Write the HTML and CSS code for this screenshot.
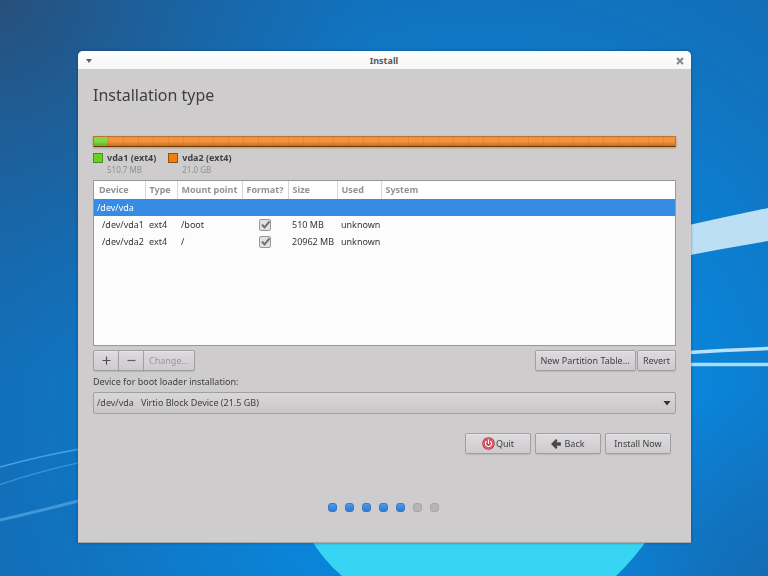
FILE: index.html
```html
<!DOCTYPE html>
<html lang="en">
<head>
<meta charset="utf-8">
<title>Install</title>
<link rel="stylesheet" href="styles.css">
</head>
<body>
<svg class="wallpaper" viewBox="0 0 768 576" preserveAspectRatio="none" aria-hidden="true">
  <defs>
    <radialGradient id="glow" gradientUnits="userSpaceOnUse" cx="480" cy="420" r="560">
      <stop offset="0" stop-color="#068ae1"/>
      <stop offset=".4" stop-color="#0a84d9"/>
      <stop offset=".75" stop-color="#1173bf"/>
      <stop offset="1" stop-color="#156bb2"/>
    </radialGradient>
    <radialGradient id="corner" gradientUnits="userSpaceOnUse" cx="0" cy="0" r="380">
      <stop offset="0" stop-color="#27507a"/>
      <stop offset="1" stop-color="#1a62a3" stop-opacity="0"/>
    </radialGradient>
    <radialGradient id="foot" gradientUnits="userSpaceOnUse" cx="768" cy="576" r="190">
      <stop offset="0" stop-color="#146bb4"/>
      <stop offset="1" stop-color="#146bb4" stop-opacity="0"/>
    </radialGradient>
  </defs>
  <rect width="768" height="576" fill="url(#glow)"/>
  <rect width="768" height="576" fill="url(#corner)"/>
  <rect width="768" height="576" fill="url(#foot)"/>
  <path d="M680 227Q725 217 768 208V241Q725 248 680 257Z" fill="#bcdff4"/>
  <path d="M680 353Q725 350 768 348.500" fill="none" stroke="#b9e2fa" stroke-width="3.500"/>
  <path d="M680 364.500H768" stroke="#a8dcf8" stroke-width="3.500"/>
  <path d="M0 467Q40 456 80 449" fill="none" stroke="#46a0e2" stroke-width="1.500"/>
  <path d="M0 484.500Q40 471 80 462.500" fill="none" stroke="#3590d6" stroke-width="1.500"/>
  <path d="M0 520Q40 511 80 500.500" fill="none" stroke="#4098d8" stroke-width="3"/>
  <path d="M309 536Q323 560 342 576H616Q633 560 650 536Z" fill="#38d4f3"/>
</svg>
<main class="desktop">
  <section class="window">
    <header class="titlebar">
      <button class="title-button" aria-label="Window menu"><svg width="6" height="4" viewBox="0 0 6 4"><path d="M0 0H6L3 4Z" fill="#5c5f63"/></svg></button>
      <span class="title">Install</span>
      <button class="title-button" aria-label="Close"><svg width="8" height="8" viewBox="0 0 8 8"><path d="M1 1L7 7M7 1L1 7" stroke="#858789" stroke-width="2"/></svg></button>
    </header>
    <div class="content">
      <h1>Installation type</h1>
      <div class="disk-bar"><span class="disk-part"></span></div>
      <ul class="legend">
        <li><i class="swatch green"></i><div><strong>vda1 (ext4)</strong><small>510.7 MB</small></div></li>
        <li><i class="swatch orange"></i><div><strong>vda2 (ext4)</strong><small>21.0 GB</small></div></li>
      </ul>
      <div class="list">
        <table>
          <colgroup><col class="c-device"><col class="c-type"><col class="c-mount"><col class="c-format"><col class="c-size"><col class="c-used"><col></colgroup>
          <thead><tr><th>Device</th><th>Type</th><th>Mount point</th><th>Format?</th><th>Size</th><th>Used</th><th>System</th></tr></thead>
          <tbody>
            <tr class="selected"><td colspan="7">/dev/vda</td></tr>
            <tr><td class="child">/dev/vda1</td><td>ext4</td><td>/boot</td><td class="check"><label class="tick"><input type="checkbox" checked aria-label="Format /dev/vda1"><svg viewBox="0 0 12 12"><path d="M3 5.500L5.500 8.500L10.500 2.500" /></svg></label></td><td>510 MB</td><td>unknown</td><td></td></tr>
            <tr><td class="child">/dev/vda2</td><td>ext4</td><td>/</td><td class="check"><label class="tick"><input type="checkbox" checked aria-label="Format /dev/vda2"><svg viewBox="0 0 12 12"><path d="M3 5.500L5.500 8.500L10.500 2.500" /></svg></label></td><td>20962 MB</td><td>unknown</td><td></td></tr>
          </tbody>
        </table>
      </div>
      <div class="toolbar">
        <div class="group">
          <button class="btn square" aria-label="Add"><svg width="9" height="9" viewBox="0 0 9 9"><path d="M0.500 4.500H8.500M4.500 0.500V8.500" stroke="#505050" stroke-width="1.200"/></svg></button>
          <button class="btn square" aria-label="Remove"><svg width="9" height="9" viewBox="0 0 9 9"><path d="M0.500 4.500H8.500" stroke="#606060" stroke-width="1.200"/></svg></button>
          <button class="btn change" disabled>Change...</button>
        </div>
        <div class="pair">
          <button class="btn">New Partition Table...</button>
          <button class="btn">Revert</button>
        </div>
      </div>
      <label class="boot-label" for="boot">Device for boot loader installation:</label>
      <div class="combo">
        <select id="boot"><option>/dev/vda &nbsp; Virtio Block Device (21.5 GB)</option></select>
        <svg class="arrow" width="8" height="5" viewBox="0 0 8 5"><path d="M0.500 0H7.500L4 4.500Z" fill="#333"/></svg>
      </div>
      <div class="actions">
        <button class="btn"><svg width="13" height="13" viewBox="0 0 13 13"><circle cx="6.500" cy="6.500" r="6.200" fill="#b92a37"/><circle cx="6.500" cy="6.500" r="4.900" fill="#d03f4b" stroke="#e6a0a5" stroke-width=".7"/><path d="M4.500 4.300A3 3 0 1 0 8.500 4.300M6.500 2.800V6.500" fill="none" stroke="#fff" stroke-width="1.200" stroke-linecap="round"/></svg>Quit</button>
        <button class="btn back"><svg width="10" height="10" viewBox="0 0 10 10"><path d="M0 5L5 0L6.500 1.500L5.500 3.300H9.800V6.700H5.500L6.500 8.500L5 10Z" fill="#484848"/></svg>Back</button>
        <button class="btn">Install Now</button>
      </div>
      <div class="dots"><i class="on"></i><i class="on"></i><i class="on"></i><i class="on"></i><i class="on"></i><i></i><i></i></div>
    </div>
  </section>
</main>
</body>
</html>
```
FILE: styles.css
```css
* { box-sizing: border-box; }
body {
  margin: 0;
  font: 9px/12px "Noto Sans", sans-serif;
  color: #404042;
  background: #0f76c4;
}
button, select { font: inherit; color: inherit; }
svg { display: block; flex: none; }
.wallpaper { position: fixed; inset: 0; width: 100%; height: 100%; }
.desktop {
  position: relative;
  display: flex;
  min-height: 100vh;
  padding: 51px 77px 33px 78px;
}
.window {
  flex: 1;
  min-width: 0;
  background: #cecccd;
  border-radius: 5px 5px 0 0;
  border-bottom: 1px solid #a5a9ac;
  box-shadow: 0 0 3px rgba(0, 30, 70, .45);
}
.titlebar {
  display: flex;
  align-items: center;
  justify-content: space-between;
  height: 18px;
  padding: 1px 7px 0 8px;
  border-radius: 5px 5px 0 0;
  background: linear-gradient(#fff, #f4f5f7);
}
.title { font-weight: 700; color: #56585c; }
.title-button {
  display: flex;
  padding: 0;
  border: 0;
  background: none;
}
.content {
  display: flex;
  flex-direction: column;
  padding: 14px 15px 0;
}
h1 { margin: 0; font-size: 16px; line-height: 24px; font-weight: 400; }
.disk-bar {
  display: flex;
  height: 11px;
  margin-top: 29px;
  border: 1px solid #b87430;
  border-bottom-color: #6e3c0c;
  background:
    repeating-linear-gradient(90deg, transparent 0 14px, rgba(140, 70, 0, .14) 14px 15px),
    linear-gradient(#f4943a, #f4943a 50%, #c66f1f);
  box-shadow: 0 1px 2px rgba(190, 120, 40, .7);
}
.disk-part { width: 13px; background: linear-gradient(#7fdb40, #80d843 50%, #5fae28); }
.legend {
  display: flex;
  gap: 12px;
  margin: 5px 0 0;
  padding: 0;
  list-style: none;
}
.legend li { display: flex; gap: 4px; }
.legend strong, .legend small { display: block; }
.legend small { font-size: 8px; color: #8f8f8f; }
.swatch { width: 10px; height: 10px; margin-top: 1px; border: 1px solid; }
.green { background: #66d321; border-color: #4f8b2a; }
.orange { background: #f37e0c; border-color: #8f5217; }
.list {
  height: 166px;
  margin-top: 4px;
  border: 1px solid #98989b;
  background: #fdfcfd;
}
table { width: 100%; table-layout: fixed; border-collapse: collapse; white-space: nowrap; }
.c-device { width: 51px; }
.c-type { width: 32px; }
.c-mount { width: 65px; }
.c-format { width: 46px; }
.c-size { width: 49px; }
.c-used { width: 44px; }
th {
  height: 18px;
  padding: 0 0 0 4px;
  text-align: left;
  color: #929294;
  border-right: 1px solid #d6d6d6;
  background: #fff;
}
th:first-child { padding-left: 5px; }
th:last-child { border-right: 0; }
td { height: 17px; padding: 0 0 0 4px; color: #353537; }
td.child { padding-left: 8px; }
td.check { padding: 0; }
.selected td { height: 17px; padding-left: 3px; color: #fff; background: #368ce5; }
.tick { position: relative; display: block; width: 12px; height: 12px; margin: 0 auto; }
.tick input {
  appearance: none;
  display: block;
  width: 12px;
  height: 12px;
  margin: 0;
  border: 1px solid #99989b;
  border-radius: 2px;
  background: #e3e0e3;
}
.tick svg { position: absolute; inset: 0; }
.tick path { fill: none; stroke: #737375; stroke-width: 2; }
.toolbar { display: flex; justify-content: space-between; margin-top: 4px; }
.group, .pair { display: flex; }
.pair { gap: 1px; }
.btn {
  display: flex;
  align-items: center;
  justify-content: center;
  height: 21px;
  padding: 0 5px;
  white-space: nowrap;
  border: 1px solid #a09fa1;
  border-radius: 2px;
  background: linear-gradient(#dddbdd, #cdcbcd);
  box-shadow: inset 0 1px #e7e5e7, 0 1px 1px rgba(0, 0, 0, .1);
}
.group .btn + .btn { margin-left: -1px; }
.group .btn { border-radius: 0; }
.group .btn:first-child { border-radius: 2px 0 0 2px; }
.group .btn:last-child { border-radius: 0 2px 2px 0; }
.square { width: 26px; }
.change { color: #979698; }
.boot-label { margin-top: 5px; }
.combo { position: relative; margin-top: 4px; }
.combo select {
  appearance: none;
  display: block;
  width: 100%;
  height: 22px;
  padding: 0 20px 0 3px;
  border: 1px solid #a09fa1;
  border-radius: 2px;
  background: linear-gradient(#d9d7d8, #c9c7c8);
}
.arrow { position: absolute; right: 5px; top: 9px; pointer-events: none; }
.actions { display: flex; justify-content: flex-end; gap: 4px; margin: 19px 5px 0 0; }
.actions .btn { width: 66px; gap: 1px; }
.actions .back { gap: 3px; }
.dots { display: flex; justify-content: center; gap: 8px; margin: 49px 2px 0 0; }
.dots i { width: 9px; height: 9px; border: 1px solid #a7a5a7; border-radius: 3px; background: #b5b3b5; }
.dots .on { border-color: #3979bd; background: linear-gradient(#4c9aec, #2d7bd5); }
```
